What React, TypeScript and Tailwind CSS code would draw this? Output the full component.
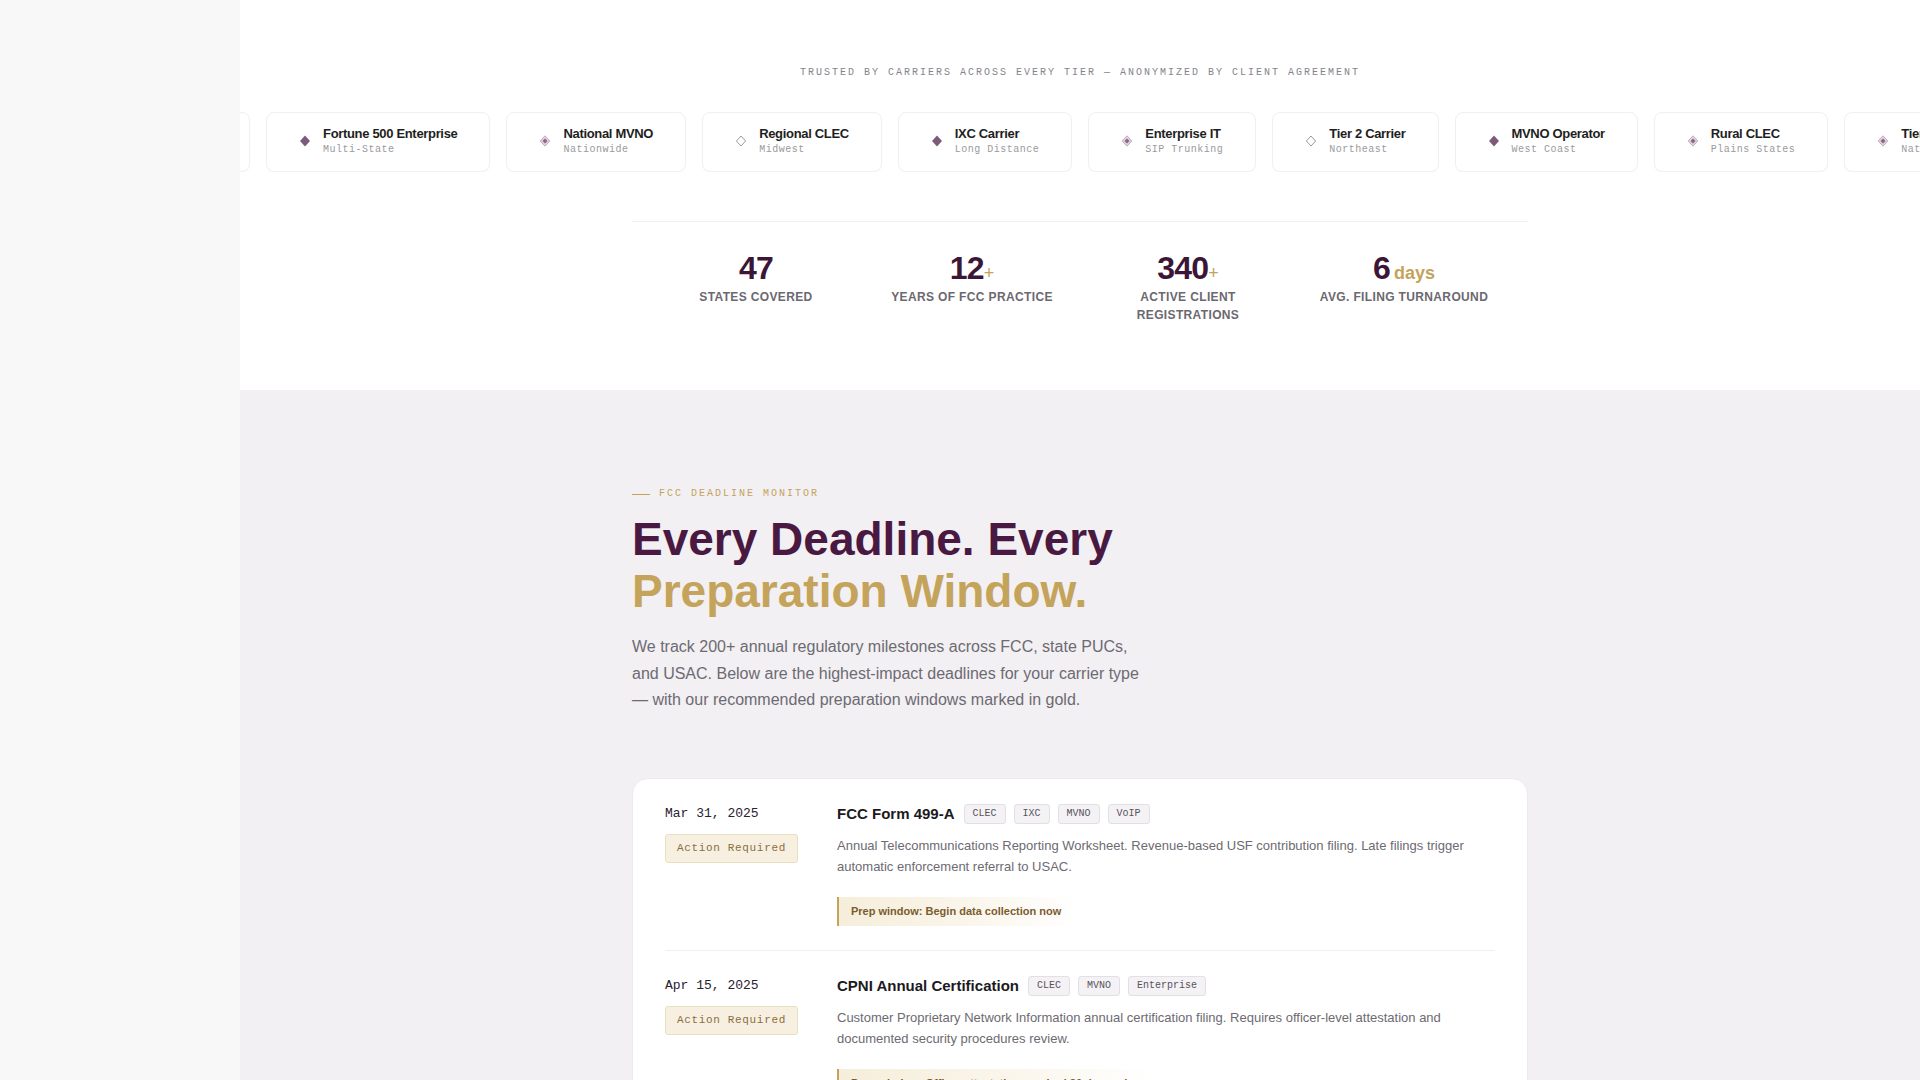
import React from 'react';

type MarkKind = 'solid' | 'dot' | 'open';

interface Carrier {
  name: string;
  region: string;
  mark: MarkKind;
}

const carriers: Carrier[] = [
  { name: 'VoIP Provider', region: 'Interconnected', mark: 'open' },
  { name: 'Fortune 500 Enterprise', region: 'Multi-State', mark: 'solid' },
  { name: 'National MVNO', region: 'Nationwide', mark: 'dot' },
  { name: 'Regional CLEC', region: 'Midwest', mark: 'open' },
  { name: 'IXC Carrier', region: 'Long Distance', mark: 'solid' },
  { name: 'Enterprise IT', region: 'SIP Trunking', mark: 'dot' },
  { name: 'Tier 2 Carrier', region: 'Northeast', mark: 'open' },
  { name: 'MVNO Operator', region: 'West Coast', mark: 'solid' },
  { name: 'Rural CLEC', region: 'Plains States', mark: 'dot' },
  { name: 'Tier 1 Carrier', region: 'Nationwide', mark: 'dot' },
  { name: 'Regional ILEC', region: 'Southeast', mark: 'open' },
];

interface Deadline {
  date: string;
  title: string;
  tags: string[];
  desc: string;
  prep: string;
}

const deadlines: Deadline[] = [
  {
    date: 'Mar 31, 2025',
    title: 'FCC Form 499-A',
    tags: ['CLEC', 'IXC', 'MVNO', 'VoIP'],
    desc: 'Annual Telecommunications Reporting Worksheet. Revenue-based USF contribution filing. Late filings trigger automatic enforcement referral to USAC.',
    prep: 'Prep window: Begin data collection now',
  },
  {
    date: 'Apr 15, 2025',
    title: 'CPNI Annual Certification',
    tags: ['CLEC', 'MVNO', 'Enterprise'],
    desc: 'Customer Proprietary Network Information annual certification filing. Requires officer-level attestation and documented security procedures review.',
    prep: 'Prep window: Officer attestation required 30 days prior',
  },
  {
    date: 'Jun 30, 2025',
    title: 'FCC Form 477',
    tags: ['CLEC', 'IXC'],
    desc: 'Broadband deployment and subscription data collection. Semi-annual filing covering service availability by census block.',
    prep: 'Prep window: Compile subscriber counts 45 days prior',
  },
];

function Mark({ kind }: { kind: MarkKind }) {
  return (
    <svg width="12" height="12" viewBox="0 0 12 12" className="shrink-0">
      {kind === 'solid' && <path d="M6 0.5 L11 6 L6 11.5 L1 6 Z" fill="#7d5a7a" />}
      {kind === 'dot' && (
        <>
          <path d="M6 0.8 L10.8 6 L6 11.2 L1.2 6 Z" fill="#e2d4df" stroke="#b89bb5" strokeWidth="0.8" />
          <path d="M6 3.4 L8.5 6 L6 8.6 L3.5 6 Z" fill="#8a6787" />
        </>
      )}
      {kind === 'open' && <path d="M6 1 L10.6 6 L6 11 L1.4 6 Z" fill="none" stroke="#9b9b9b" strokeWidth="1" />}
    </svg>
  );
}

function CarrierCard({ c }: { c: Carrier }) {
  return (
    <div className="flex shrink-0 items-center gap-3 rounded-lg border border-[#f0eff1] bg-white px-8 pb-[14px] pt-[12px] shadow-[0_1px_2px_rgba(0,0,0,0.02)]">
      <Mark kind={c.mark} />
      <div className="flex flex-col">
        <span className="whitespace-nowrap text-[13px] font-bold leading-[18px] tracking-tight text-[#1e1e22]">{c.name}</span>
        <span className="whitespace-nowrap font-['Liberation_Mono',monospace] text-[10px] leading-[14px] tracking-[0.05em] text-[#9a9a9e]">
          {c.region}
        </span>
      </div>
    </div>
  );
}

function Stat({ value, suffix, label, big }: { value: string; suffix?: string; label: string; big?: boolean }) {
  return (
    <div className="flex flex-col items-center text-center">
      <div className="flex h-[36px] items-baseline text-[32px] font-bold leading-[36px] tracking-tight text-[#3b1637]">
        {value}
        {suffix && (
          <span
            className={
              big
                ? 'ml-1 text-[18px] font-semibold leading-[36px] tracking-normal text-[#c4a35a]'
                : 'text-[18px] font-normal leading-[36px] tracking-normal text-[#c4a35a]'
            }
          >
            {suffix}
          </span>
        )}
      </div>
      <div className="mt-[2px] text-[12px] font-bold uppercase leading-[18px] tracking-[0.03em] text-[#6b6870]">{label}</div>
    </div>
  );
}

function DeadlineRow({ d, last }: { d: Deadline; last: boolean }) {
  return (
    <div className={last ? 'grid grid-cols-[140px_1fr] gap-x-8 py-6' : 'grid grid-cols-[140px_1fr] gap-x-8 border-b border-[#f0eef1] py-6'}>
      <div className="flex flex-col items-start">
        <span className="font-['Liberation_Mono',monospace] text-[13px] leading-[22px] text-[#2b2130]">{d.date}</span>
        <span className="mt-[9px] rounded-[3px] border border-[#ebdfc2] bg-[#f7f0e1] px-[11px] py-[6px] font-['Liberation_Mono',monospace] text-[11px] leading-[15px] tracking-[0.06em] text-[#8c6d3f]">
          Action Required
        </span>
      </div>
      <div className="flex flex-col items-start">
        <div className="flex items-center gap-2">
          <h3 className="mr-[1px] text-[15px] font-bold leading-[22px] text-[#1c1a1e]">{d.title}</h3>
          {d.tags.map((t) => (
            <span
              key={t}
              className="rounded-[3px] border border-[#e2dfe5] bg-[#f4f2f5] px-2 py-[2px] font-['Liberation_Mono',monospace] text-[10px] leading-[14px] text-[#57525c]"
            >
              {t}
            </span>
          ))}
        </div>
        <p className="mt-[10px] text-[13px] leading-[21px] text-[#6d6a72]">{d.desc}</p>
        <div className="mt-5 border-l-2 border-[#c4a35a] bg-gradient-to-r from-[#f6eedb] via-[#faf5ea] to-transparent py-[7px] pl-3 pr-4 text-[11px] font-bold leading-[15px] text-[#7a5c2e]">
          {d.prep}
        </div>
      </div>
    </div>
  );
}

export default function App() {
  return (
    <div className="flex min-h-screen font-['Liberation_Sans',Arial,sans-serif] antialiased">
      <aside className="w-[240px] shrink-0 bg-[#f9f8f9]" />
      <main className="min-w-0 flex-1">
        <section className="bg-white pb-[66px] pt-[65px]">
          <p className="text-center font-['Liberation_Mono',monospace] text-[10px] uppercase leading-4 tracking-[0.2em] text-[#85838a]">
            Trusted by carriers across every tier — anonymized by client agreement
          </p>
          <div className="mt-[31px] overflow-hidden">
            <div className="-ml-[171px] flex gap-[16px]">
              {carriers.map((c) => (
                <CarrierCard key={c.name + c.region} c={c} />
              ))}
            </div>
          </div>
          <div className="mx-auto mt-[49px] max-w-4xl border-t border-[#f1f0f2] pt-[28px]">
            <div className="mx-auto grid w-[832px] grid-cols-4 gap-x-8">
              <Stat value="47" label="States Covered" />
              <Stat value="12" suffix="+" label="Years of FCC Practice" />
              <Stat value="340" suffix="+" label="Active Client Registrations" />
              <Stat value="6" suffix="days" big label="Avg. Filing Turnaround" />
            </div>
          </div>
        </section>

        <section className="bg-[#f2f0f3] pb-24 pt-[97px]">
          <div className="mx-auto max-w-4xl">
            <div className="flex items-center gap-[9px]">
              <span className="h-px w-[18px] bg-[#c4a35a]" />
              <span className="font-['Liberation_Mono',monospace] text-[10px] uppercase leading-[14px] tracking-[0.2em] text-[#c4a35a]">
                FCC Deadline Monitor
              </span>
            </div>
            <h2 className="mt-[12px] text-[46px] font-bold leading-[52px] text-[#4a1942]">
              Every Deadline. Every
              <br />
              <span className="text-[#c4a35a]">Preparation Window.</span>
            </h2>
            <p className="mt-[17px] max-w-[520px] text-[16px] leading-[26.5px] text-[#6d6a72]">
              We track 200+ annual regulatory milestones across FCC, state PUCs, and USAC. Below are the highest-impact deadlines for your
              carrier type — with our recommended preparation windows marked in gold.
            </p>

            <div className="mt-16 rounded-2xl border border-[#ecebef] bg-white px-8">
              {deadlines.map((d, i) => (
                <DeadlineRow key={d.title} d={d} last={i === deadlines.length - 1} />
              ))}
            </div>
          </div>
        </section>
      </main>
    </div>
  );
}
